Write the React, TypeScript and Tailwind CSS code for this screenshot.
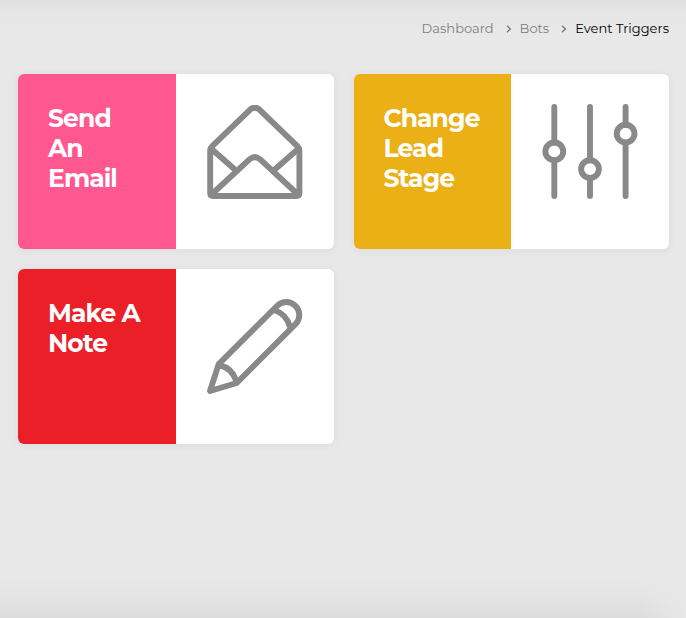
import type { ReactNode } from 'react';

interface Trigger {
  id: string;
  lines: string[];
  color: string;
  icon: ReactNode;
}

const iconProps = {
  viewBox: '0 0 96 96',
  fill: 'none',
  stroke: 'currentColor',
  strokeWidth: 5.9,
  strokeLinecap: 'round',
  strokeLinejoin: 'round',
  className: 'w-24 h-24 text-[#898989]',
} as const;

function EnvelopeIcon() {
  return (
    <svg {...iconProps}>
      <path d="M3.2 89V46Q3.2 44 5 42.3L43.2 5.6Q44.8 4 46.4 4H49.2Q50.8 4 52.4 5.6L90.6 42.3Q92.4 44 92.4 46V89Q92.4 92 89.4 92H6.2Q3.2 92 3.2 89Z" />
      <path d="M4 44.5L29.5 67M91.6 44.5L66.1 67" />
      <path d="M4.5 90.5L42.7 55.2Q47.8 51 52.9 55.2L91 90.5" />
    </svg>
  );
}

function SlidersIcon() {
  return (
    <svg {...iconProps}>
      <path d="M12.3 3V38.5M12.3 56.5V92M48 3V56M48 74V92M83.6 3V20.7M83.6 38.7V92" />
      <circle cx="12.3" cy="47.4" r="8.9" />
      <circle cx="48" cy="65.1" r="8.9" />
      <circle cx="83.6" cy="29.6" r="8.9" />
    </svg>
  );
}

function PencilIcon() {
  return (
    <svg {...iconProps}>
      <path d="M11.7 65.2L70.1 6.8A13 13 0 0 1 88.5 25.2L29.7 84L3 92Z" />
      <path d="M67.5 11.3Q79.5 15 83 28" />
      <path d="M13 66.5Q24.5 69 28.9 81" />
    </svg>
  );
}

function Separator() {
  return (
    <svg
      viewBox="0 0 6 8"
      fill="none"
      stroke="currentColor"
      strokeWidth="1.2"
      className="mr-2 ml-3 mt-[7px] h-2 w-1.5 text-[#737373]"
    >
      <path d="M1 0.8L4.4 4L1 7.2" />
    </svg>
  );
}

const triggers: Trigger[] = [
  {
    id: 'email',
    lines: ['Send', 'An', 'Email'],
    color: 'bg-[#ff5790]',
    icon: <EnvelopeIcon />,
  },
  {
    id: 'stage',
    lines: ['Change', 'Lead', 'Stage'],
    color: 'bg-[#ebb015]',
    icon: <SlidersIcon />,
  },
  {
    id: 'note',
    lines: ['Make A', 'Note'],
    color: 'bg-[#eb1f27]',
    icon: <PencilIcon />,
  },
];

function TriggerCard({ trigger }: { trigger: Trigger }) {
  return (
    <button className="flex h-[175px] overflow-hidden rounded-md bg-white text-left shadow-[0_1px_10px_rgba(0,0,0,0.06)]">
      <div
        className={`h-full w-1/2 pt-[29px] pl-[30px] text-[25px] leading-[30px] font-bold tracking-[-0.9px] text-white ${trigger.color}`}
      >
        {trigger.lines.map((line) => (
          <span key={line} className="block whitespace-nowrap">
            {line}
          </span>
        ))}
      </div>
      <div className="flex h-full w-1/2 justify-center pt-[30px]">{trigger.icon}</div>
    </button>
  );
}

export default function App() {
  return (
    <div className="flex h-[618px] w-[686px] flex-col overflow-hidden bg-[#e8e8e8] bg-[linear-gradient(to_bottom,#dfdfdf_0,#e5e5e5_10px,#e8e8e8_28px,#e8e8e8_578px,#e4e4e4_598px,#dcdcdc_618px)] font-['Montserrat',sans-serif]">
      <nav className="flex h-[74px] shrink-0 items-start justify-end pt-[18px] pr-[17px] text-[13px] leading-5 text-[#808080]">
        <span>Dashboard</span>
        <Separator />
        <span>Bots</span>
        <Separator />
        <span className="text-black">Event Triggers</span>
      </nav>
      <main className="grid grid-cols-2 gap-5 pr-[17px] pl-[18px]">
        {triggers.map((trigger) => (
          <TriggerCard key={trigger.id} trigger={trigger} />
        ))}
      </main>
      {/* Bottom shadow fades out towards the right corner */}
      <div className="mt-auto h-10 w-12 shrink-0 self-end bg-linear-to-r from-[#e8e8e8]/0 to-[#e8e8e8]" />
    </div>
  );
}
